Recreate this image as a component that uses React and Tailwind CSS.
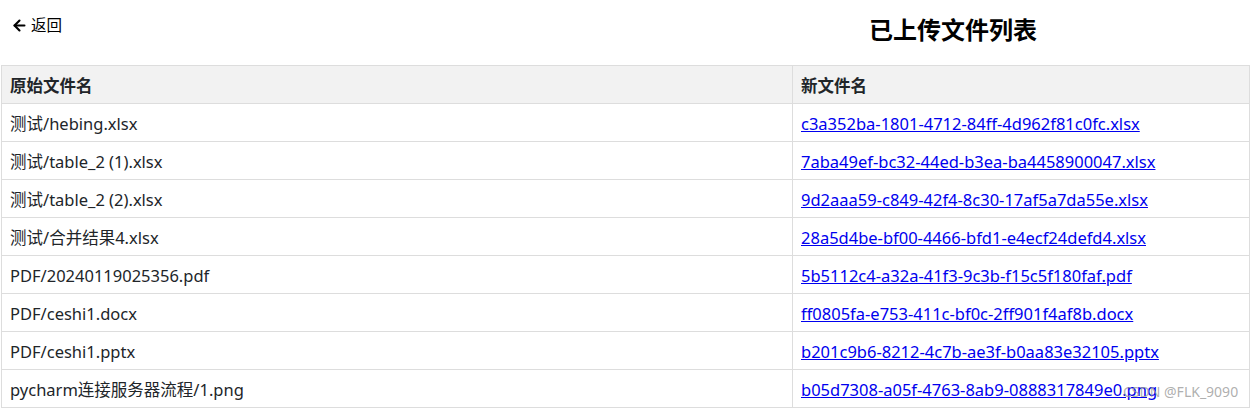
import { ArrowLeft } from 'lucide-react';

const files = [
    { orig: '测试/hebing.xlsx', saved: 'c3a352ba-1801-4712-84ff-4d962f81c0fc.xlsx' },
    { orig: '测试/table_2 (1).xlsx', saved: '7aba49ef-bc32-44ed-b3ea-ba4458900047.xlsx' },
    { orig: '测试/table_2 (2).xlsx', saved: '9d2aaa59-c849-42f4-8c30-17af5a7da55e.xlsx' },
    { orig: '测试/合并结果4.xlsx', saved: '28a5d4be-bf00-4466-bfd1-e4ecf24defd4.xlsx' },
    { orig: 'PDF/20240119025356.pdf', saved: '5b5112c4-a32a-41f3-9c3b-f15c5f180faf.pdf' },
    { orig: 'PDF/ceshi1.docx', saved: 'ff0805fa-e753-411c-bf0c-2ff901f4af8b.docx' },
    { orig: 'PDF/ceshi1.pptx', saved: 'b201c9b6-8212-4c7b-ae3f-b0aa83e32105.pptx' },
    { orig: 'pycharm连接服务器流程/1.png', saved: 'b05d7308-a05f-4763-8ab9-0888317849e0.png' },
];

const App = () => {
    return (
        <div className="relative w-[1250px] h-[409px] overflow-hidden bg-white text-[#212529] font-['Noto_Sans','Noto_Sans_CJK_SC',sans-serif]">
            {/* Top bar */}
            <div className="flex h-[65px]">
                <a href="#" className="flex items-start gap-[3px] pl-[11px] pt-[13px] text-[15.5px] leading-[24px] text-black">
                    <ArrowLeft size={17} strokeWidth={3} className="mt-[4px]" />
                    <span>返回</span>
                </a>
                <div className="ml-auto w-[594px] pt-[13px] text-center">
                    <h2 className="text-[24px] font-bold leading-[34px] text-black">已上传文件列表</h2>
                </div>
            </div>

            {/* File table */}
            <table className="ml-px w-[1249px] border-collapse text-[16.5px]">
                <thead>
                    <tr className="bg-[#f2f2f2]">
                        <th className="w-[791px] border border-[#dddddd] px-2 pt-[9px] pb-[7px] text-left font-bold leading-[21px]">原始文件名</th>
                        <th className="border border-[#dddddd] px-2 pt-[9px] pb-[7px] text-left font-bold leading-[21px]">新文件名</th>
                    </tr>
                </thead>
                <tbody>
                    {files.map((f, idx) => (
                        <tr key={idx}>
                            <td className="border border-[#dddddd] px-2 pt-[9px] pb-[7px] leading-[21px]">{f.orig}</td>
                            <td className="border border-[#dddddd] px-2 pt-[9px] pb-[7px] leading-[21px]">
                                <a href="#" className="text-[#0000ee] underline">{f.saved}</a>
                            </td>
                        </tr>
                    ))}
                </tbody>
            </table>

            {/* watermark */}
            <div className="absolute left-[1123px] top-[381px] text-[14px] text-[#9a9a9a]/80">CSDN @FLK_9090</div>
        </div>
    );
};

export default App;
